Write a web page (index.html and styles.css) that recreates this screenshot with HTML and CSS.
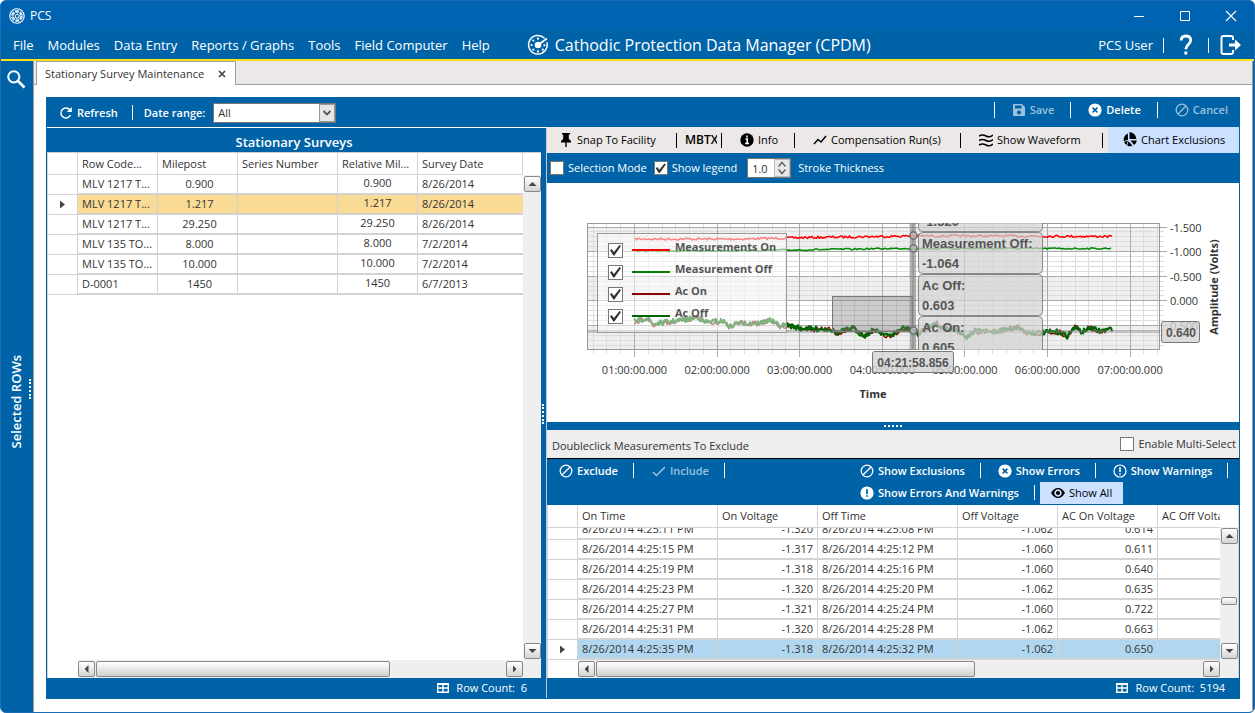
FILE: index.html
```html
<!DOCTYPE html>
<html lang="en">
<head>
<meta charset="utf-8">
<title>PCS</title>
<link rel="stylesheet" href="styles.css">
</head>
<body>
<svg class="defs" aria-hidden="true">
  <symbol id="ban" viewBox="0 0 14 14"><circle cx="7" cy="7" r="5.8" fill="none" stroke="currentColor" stroke-width="1.3"/><path d="M3.2 10.8 10.8 3.2" stroke="currentColor" stroke-width="1.3"/></symbol>
  <symbol id="xcircle" viewBox="0 0 14 14"><circle cx="7" cy="7" r="6.6" fill="currentColor"/><path d="M4.6 4.6 9.4 9.4M9.4 4.6 4.6 9.4" stroke="#0063a8" stroke-width="1.6"/></symbol>
  <symbol id="warn" viewBox="0 0 14 14"><circle cx="7" cy="7" r="6" fill="none" stroke="currentColor" stroke-width="1.2"/><path d="M7 3.2V8M7 9.2v1.6" stroke="currentColor" stroke-width="1.6"/></symbol>
  <symbol id="warnfill" viewBox="0 0 14 14"><circle cx="7" cy="7" r="6.6" fill="currentColor"/><path d="M7 3.2V8M7 9.2v1.6" stroke="#0063a8" stroke-width="1.8"/></symbol>
  <symbol id="grid" viewBox="0 0 14 14"><path d="M1.7 2.7h10.6v8.6H1.7zM1.7 7h10.6M7 3v8.5" fill="none" stroke="currentColor" stroke-width="1.4"/><path d="M1 2h12v2H1z" fill="currentColor"/></symbol>
</svg>
<div class="window">
  <header class="titlebar">
    <svg class="i16" viewBox="0 0 16 16"><circle cx="8" cy="8" r="7.2" fill="none" stroke="#fff" stroke-width="1.1"/><circle cx="8" cy="8" r="4.6" fill="none" stroke="#d9e8f5" stroke-width="2.6" stroke-dasharray="3.8 1"/><path d="M6 7.5 8 6l2.4 1.4L9.5 10H6.8z" fill="none" stroke="#fff" stroke-width="1"/></svg>
    <span>PCS</span>
    <div class="winbtns">
      <button aria-label="Minimize"><svg viewBox="0 0 12 12"><path d="M1 6.5h10" stroke="#fff"/></svg></button>
      <button aria-label="Maximize"><svg viewBox="0 0 12 12"><path d="M1.5 1.5h9v9h-9z" fill="none" stroke="#fff"/></svg></button>
      <button aria-label="Close"><svg viewBox="0 0 12 12"><path d="m1 1 10 10M11 1 1 11" stroke="#fff" stroke-width="1.1"/></svg></button>
    </div>
  </header>
  <nav class="menubar">
    <button>File</button><button>Modules</button><button>Data Entry</button><button>Reports / Graphs</button><button>Tools</button><button>Field Computer</button><button>Help</button>
    <div class="product">
      <svg viewBox="0 0 22 22"><path d="M19.9 8.4A9.3 9.3 0 1 1 17.6 4.3" fill="none" stroke="#fff" stroke-width="1.5"/><circle cx="11" cy="11" r="3.3" fill="#fff"/><path d="M11 11 20 4.6" stroke="#fff" stroke-width="1.8"/><g fill="#fff"><circle cx="11" cy="4.7" r="1.1"/><circle cx="6.3" cy="6.5" r="1.1"/><circle cx="4.6" cy="11" r="1.1"/><circle cx="6.3" cy="15.7" r="1.1"/><circle cx="11" cy="17.4" r="1.1"/><circle cx="15.8" cy="15.7" r="1.1"/><circle cx="17.4" cy="11.3" r="1.1"/></g></svg>
      <span>Cathodic Protection Data Manager (CPDM)</span>
    </div>
    <div class="user">
      <span>PCS User</span><i class="sep"></i>
      <button class="help" aria-label="Help"><svg viewBox="0 0 14 22"><path d="M2.2 6.6C2.2 3.4 4.2 2 6.8 2c2.8 0 4.9 1.5 4.9 4.2 0 4.3-4.9 4.3-4.9 9" fill="none" stroke="#fff" stroke-width="2.8"/><path d="M5.4 17.5h2.900v2.900H5.400z" fill="#fff"/></svg></button>
      <i class="sep"></i>
      <button class="exit" aria-label="Log out"><svg viewBox="0 0 22 22"><path d="M13 6V4q0-2-2-2H3.500Q1.500 2 1.500 4v14q0 2 2 2H11q2 0 2-2v-2" fill="none" stroke="#fff" stroke-width="2"/><path d="M9 9.600h6V5.500l6 5.500-6 5.500v-4.100H9z" fill="#fff"/></svg></button>
    </div>
  </nav>
  <div class="body">
    <aside class="rail">
      <button aria-label="Search"><svg viewBox="0 0 20 20"><circle cx="7.800" cy="7.800" r="5.600" fill="none" stroke="#fff" stroke-width="2"/><path d="m12 12 6.500 6.500" stroke="#fff" stroke-width="2.600"/></svg></button>
      <span class="rail-label">Selected ROWs</span>
      <i class="rail-dots"></i>
    </aside>
    <main class="main">
      <div class="tabs"><div class="tab"><span>Stationary Survey Maintenance</span><button aria-label="Close tab"><svg viewBox="0 0 8 8"><path d="m1 1 6 6M7 1 1 7" stroke="#444" stroke-width="1.700"/></svg></button></div></div>
      <section class="page">
        <div class="panel">
          <div class="toolbar">
            <button class="tb"><svg class="i14" viewBox="0 0 14 14"><path d="M11.500 9A5 5 0 1 1 10.800 3.800" fill="none" stroke="#fff" stroke-width="1.500"/><path d="M12.800 1v5H7.800z" fill="#fff"/></svg>Refresh</button>
            <i class="sep"></i>
            <label for="range">Date range:</label>
            <span class="combo"><select id="range"><option>All</option></select><svg viewBox="0 0 16 18"><rect x=".5" y=".5" width="15" height="17" fill="#e6e6e6" stroke="#999"/><path d="m4.500 7 3.500 3.500L11.500 7" fill="none" stroke="#555" stroke-width="1.800"/></svg></span>
            <div class="actions">
              <button class="tb dim" disabled><svg class="i14" viewBox="0 0 14 14"><path fill-rule="evenodd" fill="currentColor" d="M1 2q0-1 1-1h8l3 3v8q0 1-1 1H2q-1 0-1-1zM3 2.500v3h6.500v-3zM7 7.500a2 2 0 1 0 .01 0z"/></svg>Save</button>
              <button class="tb"><svg class="i14"><use href="#xcircle"/></svg>Delete</button>
              <button class="tb dim" disabled><svg class="i14"><use href="#ban"/></svg>Cancel</button>
            </div>
          </div>
          <div class="split">
            <section class="left">
              <h2>Stationary Surveys</h2>
              <div class="gridbox">
                <div class="rows">
                  <table class="surveys">
                    <colgroup><col class="c30"><col class="c80"><col class="c80"><col class="c100"><col class="c80"><col></colgroup>
                    <thead><tr><th></th><th>Row Code...</th><th>Milepost</th><th>Series Number</th><th>Relative Mil...</th><th>Survey Date</th></tr></thead>
                    <tbody>
                      <tr><td></td><td>MLV 1217 T...</td><td>0.900</td><td></td><td>0.900</td><td>8/26/2014</td></tr>
                      <tr class="picked"><td><i class="caret"></i></td><td>MLV 1217 T...</td><td>1.217</td><td></td><td>1.217</td><td>8/26/2014</td></tr>
                      <tr><td></td><td>MLV 1217 T...</td><td>29.250</td><td></td><td>29.250</td><td>8/26/2014</td></tr>
                      <tr><td></td><td>MLV 135 TO...</td><td>8.000</td><td></td><td>8.000</td><td>7/2/2014</td></tr>
                      <tr><td></td><td>MLV 135 TO...</td><td>10.000</td><td></td><td>10.000</td><td>7/2/2014</td></tr>
                      <tr><td></td><td>D-0001</td><td>1450</td><td></td><td>1450</td><td>6/7/2013</td></tr>
                    </tbody>
                  </table>
                </div>
                <div class="vbar"><button class="sb up" aria-label="Scroll up"></button><button class="sb down" aria-label="Scroll down"></button></div>
                <div class="hbar"><button class="sb prev" aria-label="Scroll left"></button><i class="thumb t-left"></i><button class="sb next" aria-label="Scroll right"></button></div>
              </div>
              <footer><svg class="i14"><use href="#grid"/></svg>Row Count:&nbsp; 6</footer>
            </section>
            <i class="vsplit"></i>
            <section class="right">
              <div class="charttools">
                <button><svg class="i14" viewBox="0 0 14 14"><path d="M3 0h8v1.500H9.800V6l2.200 2v1.500H7.700V14H6.300V9.500H2V8l2.200-2V1.500H3z"/></svg>Snap To Facility</button>
                <button class="mbtx"><b>MBTX</b></button>
                <button><svg class="i14" viewBox="0 0 14 14"><circle cx="7" cy="7" r="6.700"/><path d="M7 2.600v2M5.500 6h1.700v4.500M5 10.500h4" stroke="#fff" stroke-width="1.600" fill="none"/></svg>Info</button>
                <button><svg class="i14" viewBox="0 0 14 14"><path d="M1 11 5 6.500 8 9l5-6" fill="none" stroke="#000" stroke-width="1.500"/></svg>Compensation Run(s)</button>
                <button><svg class="i14" viewBox="0 0 14 14"><path d="M0 3q3.500-2 7 0t7-1M0 7.500q3.500-2 7 0t7-1M0 12q3.500-2 7 0t7-1" fill="none" stroke="#000" stroke-width="1.600"/></svg>Show Waveform</button>
                <button class="on"><svg class="i16" viewBox="0 0 15 15"><path d="M6.500 1.500V8l4.300 5A6 6 0 1 1 6.500 1.500M8 0a7 7 0 0 1 6.500 6.500H8zM8.800 8h6a6 6 0 0 1-2.500 4.300z"/><path d="M1 9.500 7 7.500 5 14" stroke="#cce0ff" fill="none" stroke-width=".8"/></svg>Chart Exclusions</button>
              </div>
              <div class="options">
                <label><input type="checkbox">Selection Mode</label>
                <label><input type="checkbox" checked>Show legend</label>
                <span class="spin"><input id="thick" type="text" value="1.0"><svg viewBox="0 0 16 18"><rect x=".5" y=".5" width="15" height="17" fill="#e9e9e9" stroke="#bbb"/><path d="m4.500 7.500 3.500-4 3.500 4M4.500 10.500l3.500 4 3.500-4" fill="none" stroke="#666" stroke-width="1.600"/></svg></span>
                <label for="thick">Stroke Thickness</label>
              </div>
              <div class="chart">
                <svg id="plot" viewBox="547 183 692 239" preserveAspectRatio="xMinYMin meet">
                  <defs><clipPath id="area"><rect x="587" y="223" width="573" height="127"/></clipPath></defs>
                  <rect x="587" y="223" width="573" height="127" fill="#fff"/>
                  <g fill="#efefef"><rect x="587" y="227" width="573" height="25"/><rect x="587" y="276" width="573" height="25"/><rect x="587" y="325" width="573" height="25"/></g>
                  <g id="lines"></g>
                  <rect x="587.5" y="223.500" width="572" height="126" fill="none" stroke="#999"/>
                  <g id="series" fill="none" stroke-linejoin="round"></g>
                  <g clip-path="url(#area)">
                    <rect x="832.500" y="296.500" width="80" height="35" fill="#808080" fill-opacity=".4" stroke="#777"/>
                    <rect x="587" y="330" width="573" height="3" fill="#808080" fill-opacity=".4"/>
                    <rect x="910" y="223" width="6" height="127" fill="#808080" fill-opacity=".6"/>
                    <path d="M913 223v127" stroke="#888"/>
                    <g fill="#ccc" fill-opacity=".6" stroke="#666" stroke-width="1.300"><circle cx="913.500" cy="235.500" r="3.600"/><circle cx="913.500" cy="248.500" r="3.600"/><circle cx="913.500" cy="330.500" r="3.600"/></g>
                    <g fill="#d3d3d3" fill-opacity=".72" stroke="#888"><rect x="918.500" y="190.500" width="124" height="41" rx="4"/><rect x="918.500" y="232.500" width="124" height="41" rx="4"/><rect x="918.500" y="274.500" width="124" height="41" rx="4"/><rect x="918.500" y="316.500" width="124" height="41" rx="4"/></g>
                    <g class="tip"><text x="922" y="226">-1.320</text><text x="922" y="248">Measurement Off:</text><text x="922" y="268">-1.064</text><text x="922" y="290">Ac Off:</text><text x="922" y="310">0.603</text><text x="922" y="332">Ac On:</text><text x="922" y="352">0.605</text></g>
                  </g>
                  <g id="labels"></g>
                  <g fill="#d3d3d3" fill-opacity=".8" stroke="#777"><rect x="872.500" y="351.500" width="81" height="21" rx="2"/><rect x="1161.500" y="321.500" width="38" height="21" rx="2"/></g>
                  <g class="tip mid"><text x="913" y="367">04:21:58.856</text><text x="1181" y="337">0.640</text></g>
                  <text class="axis mid" x="873" y="398">Time</text>
                  <text class="axis mid" transform="translate(1218 287) rotate(-90)">Amplitude (Volts)</text>
                </svg>
                <div class="legend">
                  <label><input type="checkbox" checked><i class="red"></i>Measurements On</label>
                  <label><input type="checkbox" checked><i class="green"></i>Measurement Off</label>
                  <label><input type="checkbox" checked><i class="maroon"></i>Ac On</label>
                  <label><input type="checkbox" checked><i class="dark"></i>Ac Off</label>
                </div>
              </div>
              <i class="hsplit"></i>
              <div class="caption"><span>Doubleclick Measurements To Exclude</span><label><input type="checkbox">Enable Multi-Select</label></div>
              <div class="filters">
                <div class="group">
                  <button class="tb"><svg class="i14"><use href="#ban"/></svg>Exclude</button>
                  <button class="tb dim" disabled><svg class="i14" viewBox="0 0 14 14"><path d="m1 8 3.500 3.500L13 3" fill="none" stroke="currentColor" stroke-width="1.500"/></svg>Include</button>
                </div>
                <div class="group wrap">
                  <button class="tb"><svg class="i14"><use href="#ban"/></svg>Show Exclusions</button>
                  <button class="tb"><svg class="i14"><use href="#xcircle"/></svg>Show Errors</button>
                  <button class="tb"><svg class="i14"><use href="#warn"/></svg>Show Warnings</button>
                  <button class="tb"><svg class="i14"><use href="#warnfill"/></svg>Show Errors And Warnings</button>
                  <button class="tb on"><svg class="i14" viewBox="0 0 14 14"><path fill-rule="evenodd" d="M0 7Q3 2 7 2t7 5q-3 5-7 5T0 7zM7 3.300a3.700 3.700 0 1 0 .01 0zM7 5a2 2 0 1 1-.01 0z"/></svg>Show All</button>
                </div>
              </div>
              <div class="gridbox">
                <div class="rows">
                  <table class="meas">
                    <colgroup><col class="c30"><col class="c140"><col class="c100"><col class="c140"><col class="c100"><col class="c100"><col></colgroup>
                    <thead><tr><th></th><th>On Time</th><th>On Voltage</th><th>Off Time</th><th>Off Voltage</th><th>AC On Voltage</th><th class="cut">AC Off Voltage</th></tr></thead>
                  </table>
                  <div class="scrolled">
                  <table class="meas">
                    <colgroup><col class="c30"><col class="c140"><col class="c100"><col class="c140"><col class="c100"><col class="c100"><col></colgroup>
                    <tbody>
                      <tr><td></td><td>8/26/2014 4:25:11 PM</td><td>-1.320</td><td>8/26/2014 4:25:08 PM</td><td>-1.062</td><td>0.614</td><td></td></tr>
                      <tr><td></td><td>8/26/2014 4:25:15 PM</td><td>-1.317</td><td>8/26/2014 4:25:12 PM</td><td>-1.060</td><td>0.611</td><td></td></tr>
                      <tr><td></td><td>8/26/2014 4:25:19 PM</td><td>-1.318</td><td>8/26/2014 4:25:16 PM</td><td>-1.060</td><td>0.640</td><td></td></tr>
                      <tr><td></td><td>8/26/2014 4:25:23 PM</td><td>-1.320</td><td>8/26/2014 4:25:20 PM</td><td>-1.062</td><td>0.635</td><td></td></tr>
                      <tr><td></td><td>8/26/2014 4:25:27 PM</td><td>-1.321</td><td>8/26/2014 4:25:24 PM</td><td>-1.060</td><td>0.722</td><td></td></tr>
                      <tr><td></td><td>8/26/2014 4:25:31 PM</td><td>-1.320</td><td>8/26/2014 4:25:28 PM</td><td>-1.062</td><td>0.663</td><td></td></tr>
                      <tr class="picked"><td><i class="caret"></i></td><td>8/26/2014 4:25:35 PM</td><td>-1.318</td><td>8/26/2014 4:25:32 PM</td><td>-1.062</td><td>0.650</td><td></td></tr>
                    </tbody>
                  </table>
                  </div>
                </div>
                <div class="vbar"><button class="sb up" aria-label="Scroll up"></button><i class="vthumb"></i><button class="sb down" aria-label="Scroll down"></button></div>
                <div class="hbar"><button class="sb prev" aria-label="Scroll left"></button><i class="thumb t-right"></i><button class="sb next" aria-label="Scroll right"></button></div>
              </div>
              <footer><svg class="i14"><use href="#grid"/></svg>Row Count:&nbsp; 5194</footer>
            </section>
          </div>
        </div>
      </section>
    </main>
  </div>
</div>
<script src="chart.js"></script>
</body>
</html>
```
FILE: styles.css
```css
* { box-sizing: border-box; }
body { margin: 0; font: 11px/16px "Open Sans", "Noto Sans", sans-serif; color: #333; }
button { font: inherit; color: inherit; background: none; border: 0; padding: 0; margin: 0; }
svg { display: block; flex: none; }
.defs { position: absolute; width: 0; height: 0; }
.i14 { width: 14px; height: 14px; }
.i16 { width: 16px; height: 16px; }
.sep { width: 1px; height: 15px; background: #fff; flex: none; }

.window { height: 100vh; display: flex; flex-direction: column; background: #0063a8; border: 1px solid #1a6db5; border-radius: 6px; overflow: hidden; }
.titlebar { flex: none; height: 29px; display: flex; align-items: center; gap: 5px; padding-left: 8px; background: #0063b1; color: #fff; font-size: 12px; }
.winbtns { margin-left: auto; display: flex; }
.winbtns button { width: 46px; height: 28px; display: grid; place-items: center; }
.winbtns svg { width: 12px; height: 12px; }
.menubar { flex: none; height: 31px; display: flex; align-items: center; gap: 14px; padding: 1px 12px 0 12px; border-bottom: 2px solid #ffe01b; color: #fff; font-size: 13px; white-space: nowrap; }
.product { display: flex; align-items: center; gap: 6px; margin-left: 23px; font-size: 16px; }
.product svg { width: 22px; height: 22px; }
.user { margin-left: auto; display: flex; align-items: center; gap: 10px; }
.help svg { width: 14px; height: 22px; margin: 0 5px; }
.exit svg { width: 22px; height: 22px; margin-left: 1px; }

.body { flex: 1; min-height: 0; display: flex; }
.rail { position: relative; width: 32px; flex: none; display: flex; flex-direction: column; align-items: center; justify-content: center; color: #fff; }
.rail button { position: absolute; top: 8px; left: 5px; }
.rail button svg { width: 20px; height: 20px; }
.rail-label { writing-mode: vertical-rl; transform: rotate(180deg); font-size: 13px; font-weight: 600; margin: 30px 2px 0 0; }
.rail-dots { position: absolute; right: 2px; top: 318px; height: 20px; border-right: 2px dotted #fff; }
.main { flex: 1; min-width: 0; display: flex; flex-direction: column; background: #fff; border-left: 1px solid #a0a0a0; border-right: 1px solid #a0a0a0; margin-right: 1px; }
.tabs { flex: none; height: 24px; background: #ebe8e7; border-bottom: 1px solid #a0a0a0; padding-left: 2px; }
.tab { width: 200px; height: 24px; display: flex; align-items: center; justify-content: space-between; padding: 0 9px 0 8px; background: #fff; border: 1px solid #a0a0a0; border-bottom: 0; white-space: nowrap; }
.tab svg { width: 8px; height: 8px; }
.page { flex: 1; min-height: 0; display: flex; padding: 12px 12px 13px 12px; }
.panel { flex: 1; min-width: 0; display: flex; flex-direction: column; border: 1px solid #0063a8; background: #0063a8; }
.toolbar { flex: none; height: 29px; display: flex; align-items: center; padding-left: 12px; color: #fff; font-weight: 600; }
.tb { display: flex; align-items: center; gap: 4px; color: #fff; font-weight: 600; white-space: nowrap; }
.dim { color: #9cc1de; }
.toolbar > .sep { margin: 0 11px 0 14px; }
.combo { position: relative; width: 123px; height: 20px; margin-left: 8px; }
.combo select { appearance: none; width: 100%; height: 20px; font: inherit; font-weight: 400; border: 1px solid #777; border-radius: 0; background: #fff; color: #333; padding: 0 4px; }
.combo svg { position: absolute; right: 1px; top: 1px; width: 16px; height: 18px; pointer-events: none; }
.actions { margin-left: auto; display: flex; align-self: flex-start; padding: 4px 11px 0 0; }
.actions .tb { height: 16px; border-left: 1px solid #fff; padding-left: 17px; margin-left: 16px; }

.split { flex: 1; min-height: 0; display: flex; }
.left { flex: 494 1 0; min-width: 0; display: flex; flex-direction: column; border-top: 1px solid #fff; }
.left h2 { flex: none; margin: 0; height: 25px; padding-top: 2px; color: #fff; font-size: 13px; line-height: 24px; font-weight: 600; text-align: center; border-bottom: 1px solid #ccc; }
.vsplit { width: 6px; flex: none; border-top: 1px solid #fff; border-right: 1px solid #c8c8c8; display: flex; align-items: center; }
.vsplit::after { content: ""; height: 20px; border-left: 2px dotted #fff; margin: 2px 0 0 1px; }
.right { flex: 692 1 0; min-width: 0; display: flex; flex-direction: column; }
footer { flex: none; height: 20px; display: flex; align-items: center; justify-content: flex-end; gap: 6px; padding-right: 14px; color: #fff; }

.gridbox { flex: 1; min-height: 0; display: grid; grid-template: minmax(0, 1fr) 18px / minmax(0, 1fr) 18px; background: #fff; border-left: 1px solid #d3d3d3; }
.right .gridbox { border-right: 1px solid #d3d3d3; }
.rows { overflow: hidden; display: flex; flex-direction: column; }
.scrolled { flex: 1; min-height: 0; overflow: hidden; display: flex; flex-direction: column; justify-content: flex-end; }
table { width: 100%; flex: none; table-layout: fixed; border-collapse: separate; border-spacing: 0; }
.c30 { width: 30px; } .c80 { width: 80px; } .c100 { width: 100px; } .c140 { width: 140px; }
th { height: 22px; padding: 0 4px; font-weight: 400; text-align: left; white-space: nowrap; overflow: hidden; border: solid #d3d3d3; border-width: 0 1px 1px 0; }
.meas th { height: 23px; }
td { height: 20px; line-height: 16px; padding: 0 4px; white-space: nowrap; overflow: hidden; border: solid #d3d3d3; border-width: 0 1px 2px 0; }
td:first-child { border-bottom-width: 1px; }
td:last-child { border-right: 0; }
.surveys td:nth-child(3) { text-align: center; padding-left: 8px; }
.surveys td:nth-child(5) { text-align: center; padding-bottom: 3px; line-height: 15px; }
.surveys .picked td:not(:first-child) { background: #fadb95; }
.meas td:nth-child(3), .meas td:nth-child(5), .meas td:nth-child(6) { text-align: right; }
.meas .picked td:not(:first-child) { background: #b0d6f0; }
.meas .cut { border-right: 0; padding-right: 0; }
.caret { display: block; margin: 0 auto; width: 5px; height: 8px; background: #444; clip-path: polygon(0 0, 100% 50%, 0 100%); }
.vbar { display: flex; flex-direction: column; justify-content: space-between; padding: 23px 0 1px 1px; background: linear-gradient(#fff 22px, #efefef 22px); }
.hbar { grid-column: 1 / -1; display: flex; padding: 1px 18px 1px 30px; background: linear-gradient(90deg, #fff 30px, #efefef 30px); }
.sb { width: 17px; height: 16px; flex: none; display: grid; place-items: center; border: 1px solid #888; border-radius: 2px; background: linear-gradient(#fff, #d5d5d5); }
.sb::after { content: ""; width: 8px; height: 4px; background: #444; clip-path: polygon(50% 0, 100% 100%, 0 100%); }
.sb.down::after { clip-path: polygon(0 0, 100% 0, 50% 100%); }
.sb.prev::after { width: 4px; height: 8px; clip-path: polygon(100% 0, 100% 100%, 0 50%); }
.sb.next::after { width: 4px; height: 8px; clip-path: polygon(0 0, 100% 50%, 0 100%); }
.sb.next { margin-left: auto; }
.thumb { border: 1px solid #888; border-radius: 2px; background: linear-gradient(#fff, #d0d0d0); height: 16px; margin-left: 1px; }
.t-left { width: 66%; }
.t-right { width: 59%; }
.vthumb { width: 16px; height: 8px; margin: 53px 0 auto; border: 1px solid #888; border-radius: 2px; background: linear-gradient(#fff, #ddd); }

.charttools { flex: none; height: 26px; display: grid; grid-template-columns: 130px 45px 73px 166px 142px 1fr; background: #ebe8e7; color: #000; }
.charttools button { position: relative; display: flex; align-items: center; gap: 4px; padding: 0 8px 0 18px; white-space: nowrap; }
.charttools button:not(:last-child)::after { content: ""; position: absolute; right: 0; top: 6px; width: 1px; height: 15px; background: #000; }
.charttools button:first-child { padding-left: 12px; }
.charttools .mbtx { padding: 0 5px 0 8px; }
.mbtx b { width: 32px; overflow: hidden; text-align: left; font-size: 12px; font-weight: 600; }
.on { background: #cce0ff; color: #000; }
.charttools .on { margin-left: 5px; padding-left: 13px; gap: 4px; }
.options { flex: none; height: 30px; display: flex; align-items: center; gap: 7px; padding-left: 3px; color: #fff; }
label { display: flex; align-items: center; gap: 4px; white-space: nowrap; }
input[type=checkbox] { appearance: none; position: relative; margin: 0; width: 14px; height: 14px; flex: none; background: #fff; border: 1px solid #777; }
input[type=checkbox]:checked::after { content: ""; position: absolute; inset: 1px; background: #333; clip-path: polygon(0 52%, 14% 40%, 36% 68%, 86% 4%, 100% 14%, 40% 100%, 30% 100%); }
.spin { position: relative; margin: 0 0 0 3px; }
.spin input { display: block; width: 44px; height: 20px; font: inherit; color: #333; border: 1px solid #777; padding: 0 4px; }
.spin svg { position: absolute; right: 1px; top: 1px; width: 16px; height: 18px; }
.chart { flex: none; position: relative; height: 239px; background: #fff; overflow: hidden; }
.chart > svg { width: 100%; height: 239px; }
.chart text { font: 11px "Open Sans", sans-serif; fill: #333; }
.chart .tip text { font: bold 13px "Liberation Sans", Arial, sans-serif; fill: #555; }
.chart .tip.mid text { font-size: 12px; }
.chart .mid, .chart .mid text { text-anchor: middle; }
.chart text.axis { font-weight: 700; }
.legend { position: absolute; left: 50px; top: 50px; width: 190px; height: 100px; border: 1px solid #999; background: rgba(255, 255, 255, .5); padding: 6px 0 0 10px; color: #555; font-weight: 700; }
.legend label { height: 22px; gap: 0; line-height: 14px; padding-bottom: 8px; }
.legend input { top: 3px; margin-right: 9px; width: 15px; height: 15px; }
.legend i { width: 38px; height: 2px; margin: 5px 5px 0 0; }
.red { background: #f00; } .green { background: #008000; } .maroon { background: #8b0000; } .dark { background: #006400; }
.hsplit { flex: none; height: 8px; display: grid; place-items: center; }
.hsplit::after { content: ""; width: 18px; border-top: 2px dotted #fff; }
.caption { flex: none; height: 29px; display: flex; justify-content: space-between; align-items: center; padding: 0 3px 0 5px; background: #ededed; border-bottom: 1px solid #000; }
.caption span { padding-top: 4px; }
.filters { flex: none; display: flex; justify-content: space-between; align-items: flex-start; height: 46px; }
.group { display: flex; padding-top: 1px; }
.group .tb { position: relative; height: 22px; padding: 0 16px 0 12px; margin-right: 6px; }
.group .tb:not(.on)::after { content: ""; position: absolute; right: 0; top: 3px; width: 1px; height: 15px; background: #fff; }
.wrap { flex: 0 0 391px; flex-wrap: wrap; }
.group.wrap .tb { margin-right: 5px; }
.group .on { color: #000; padding: 0 11px; font-weight: 400; }
```
FILE: chart.js
```js
// Draws grid lines, axis labels and the measurement series.
const NS = "http://www.w3.org/2000/svg";
function add(parent, tag, attrs, text) {
  const el = document.createElementNS(NS, tag);
  for (const k in attrs) el.setAttribute(k, attrs[k]);
  if (text) el.textContent = text;
  document.getElementById(parent).appendChild(el);
}
const X0 = 634.5, DX = 82.6, Y0 = 227.5, DY = 24.6;
for (let pass = 0; pass < 2; pass++) {
  for (let i = -3; i <= 38; i++) {
    const major = i % 6 === 0;
    if (major !== (pass === 1)) continue;
    const x = Math.round(X0 + i * DX / 6 - 0.5) + 0.5;
    if (x > 1158) continue;
    add("lines", "path", { d: `M${x} 223V${major ? 357 : 354}`, stroke: major ? "#aaa" : "#ddd" });
  }
  for (let i = 0; i <= 24; i++) {
    const major = i % 5 === 0;
    if (major !== (pass === 1)) continue;
    const y = Math.round(Y0 + i * DY / 5) - 0.5;
    add("lines", "path", { d: `M587 ${y}H${major ? 1167 : 1164}`, stroke: major ? "#aaa" : "#ddd" });
  }
}
for (let h = 1; h <= 7; h++)
  add("labels", "text", { x: X0 + (h - 1) * DX, y: 374, class: "mid" }, `0${h}:00:00.000`);
["-1.500", "-1.000", "-0.500", "0.000", "0.500"].forEach((t, i) =>
  add("labels", "text", { x: 1170, y: Y0 + i * DY + 4 }, t));

let seed = 7;
const rnd = () => (seed = (seed * 16807) % 2147483647) / 2147483647 - 0.5;
function trace(points, noise, step, shift) {
  let d = "", k = 0;
  for (let x = points[0][0]; x <= points[points.length - 1][0]; x += step) {
    while (k < points.length - 2 && points[k + 1][0] < x) k++;
    const [ax, ay] = points[k], [bx, by] = points[k + 1];
    const y = ay + (by - ay) * (x - ax) / (bx - ax) + rnd() * noise + shift;
    d += (d ? "L" : "M") + x.toFixed(1) + " " + y.toFixed(1);
  }
  return d;
}
const on = [[635, 239], [740, 239], [785, 238], [840, 237], [913, 236], [1000, 236], [1112, 236.5]];
const off = [[635, 251], [700, 251], [790, 250], [860, 249], [890, 248.5], [1112, 248.5]];
const ac = [[634, 322], [647, 318], [653, 324], [667, 322], [690, 319], [698, 317], [704, 322], [723, 321], [730, 327], [737, 323],
  [760, 323], [770, 320], [780, 326], [787, 325], [800, 328], [813, 329], [830, 329], [837, 333], [843, 331], [853, 328], [864, 336],
  [872, 331], [877, 330], [887, 336], [893, 334], [903, 328], [913, 330], [918, 334], [927, 328], [937, 323], [942, 328], [955, 329],
  [967, 337], [975, 331], [990, 332], [1003, 330], [1018, 327], [1025, 332], [1040, 333], [1050, 332], [1060, 332], [1067, 336],
  [1075, 327], [1082, 332], [1090, 328], [1100, 331], [1112, 329]];
add("series", "path", { d: trace(on, 2.2, 1.5, 0), stroke: "#f00", "stroke-width": 1.5 });
add("series", "path", { d: trace(off, 1.6, 2, 0), stroke: "#080", "stroke-width": 1.5 });
add("series", "path", { d: trace(ac, 5, 1.5, 0.5), stroke: "#8b0000", "stroke-width": 1.5 });
add("series", "path", { d: trace(ac, 5, 1, 0), stroke: "#006400", "stroke-width": 2.2 });
```
